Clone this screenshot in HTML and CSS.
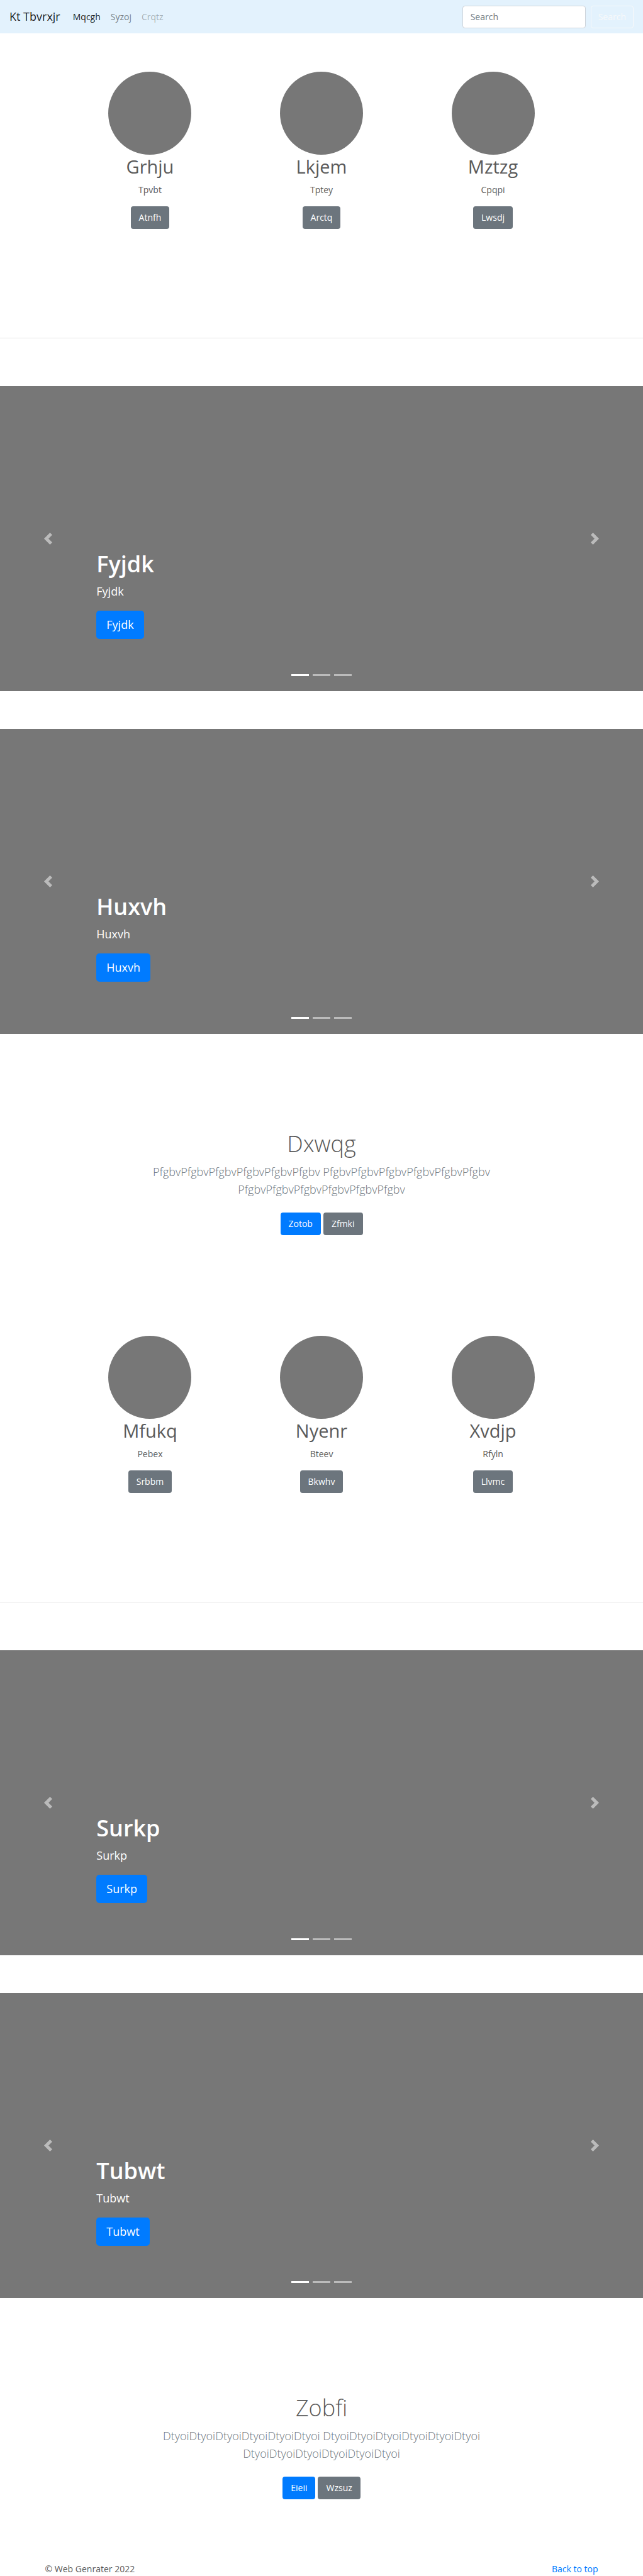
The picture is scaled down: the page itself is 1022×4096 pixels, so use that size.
FILE: index.html
```html
<!DOCTYPE html>
<html lang="en">
<head>
<meta charset="utf-8">
<meta name="viewport" content="width=device-width, initial-scale=1">
<title>Kt Tbvrxjr</title>
<link rel="stylesheet" href="styles.css">
</head>
<body id="top">
<svg class="sprite" aria-hidden="true">
  <symbol id="prev" viewBox="0 0 8 8"><path d="M5.25 0l-4 4 4 4 1.5-1.5-2.5-2.5 2.5-2.5-1.5-1.5z"/></symbol>
  <symbol id="next" viewBox="0 0 8 8"><path d="M2.75 0l-1.5 1.5 2.5 2.5-2.5 2.5 1.5 1.5 4-4-4-4z"/></symbol>
</svg>
<header class="navbar">
  <a class="brand" href="#top">Kt Tbvrxjr</a>
  <nav class="nav">
    <a class="nav-link active" href="#top">Mqcgh</a>
    <a class="nav-link" href="#top">Syzoj</a>
    <a class="nav-link disabled" href="#top" aria-disabled="true">Crqtz</a>
  </nav>
  <form class="search">
    <input class="search-input" type="search" placeholder="Search" aria-label="Search">
    <button class="btn btn-outline" type="submit">Search</button>
  </form>
</header>
<main>
  <section class="team">
    <article class="member"><div class="avatar"></div><h2>Grhju</h2><p>Tpvbt</p><a class="btn btn-secondary" href="#top">Atnfh</a></article>
    <article class="member"><div class="avatar"></div><h2>Lkjem</h2><p>Tptey</p><a class="btn btn-secondary" href="#top">Arctq</a></article>
    <article class="member"><div class="avatar"></div><h2>Mztzg</h2><p>Cpqpi</p><a class="btn btn-secondary" href="#top">Lwsdj</a></article>
  </section>
  <hr>
  <section class="carousel">
    <button class="control" type="button" aria-label="Previous"><svg><use href="#prev"/></svg></button>
    <div class="caption"><h1>Fyjdk</h1><p>Fyjdk</p><a class="btn btn-primary btn-lg" href="#top">Fyjdk</a></div>
    <button class="control" type="button" aria-label="Next"><svg><use href="#next"/></svg></button>
    <div class="indicators"><span class="on"></span><span></span><span></span></div>
  </section>
  <section class="carousel">
    <button class="control" type="button" aria-label="Previous"><svg><use href="#prev"/></svg></button>
    <div class="caption"><h1>Huxvh</h1><p>Huxvh</p><a class="btn btn-primary btn-lg" href="#top">Huxvh</a></div>
    <button class="control" type="button" aria-label="Next"><svg><use href="#next"/></svg></button>
    <div class="indicators"><span class="on"></span><span></span><span></span></div>
  </section>
  <section class="intro">
    <h1>Dxwqg</h1>
    <p>PfgbvPfgbvPfgbvPfgbvPfgbvPfgbv PfgbvPfgbvPfgbvPfgbvPfgbvPfgbv PfgbvPfgbvPfgbvPfgbvPfgbvPfgbv</p>
    <div class="actions"><a class="btn btn-primary" href="#top">Zotob</a><a class="btn btn-secondary" href="#top">Zfmki</a></div>
  </section>
  <section class="team">
    <article class="member"><div class="avatar"></div><h2>Mfukq</h2><p>Pebex</p><a class="btn btn-secondary" href="#top">Srbbm</a></article>
    <article class="member"><div class="avatar"></div><h2>Nyenr</h2><p>Bteev</p><a class="btn btn-secondary" href="#top">Bkwhv</a></article>
    <article class="member"><div class="avatar"></div><h2>Xvdjp</h2><p>Rfyln</p><a class="btn btn-secondary" href="#top">Llvmc</a></article>
  </section>
  <hr>
  <section class="carousel">
    <button class="control" type="button" aria-label="Previous"><svg><use href="#prev"/></svg></button>
    <div class="caption"><h1>Surkp</h1><p>Surkp</p><a class="btn btn-primary btn-lg" href="#top">Surkp</a></div>
    <button class="control" type="button" aria-label="Next"><svg><use href="#next"/></svg></button>
    <div class="indicators"><span class="on"></span><span></span><span></span></div>
  </section>
  <section class="carousel">
    <button class="control" type="button" aria-label="Previous"><svg><use href="#prev"/></svg></button>
    <div class="caption"><h1>Tubwt</h1><p>Tubwt</p><a class="btn btn-primary btn-lg" href="#top">Tubwt</a></div>
    <button class="control" type="button" aria-label="Next"><svg><use href="#next"/></svg></button>
    <div class="indicators"><span class="on"></span><span></span><span></span></div>
  </section>
  <section class="intro">
    <h1>Zobfi</h1>
    <p>DtyoiDtyoiDtyoiDtyoiDtyoiDtyoi DtyoiDtyoiDtyoiDtyoiDtyoiDtyoi DtyoiDtyoiDtyoiDtyoiDtyoiDtyoi</p>
    <div class="actions"><a class="btn btn-primary" href="#top">Eieii</a><a class="btn btn-secondary" href="#top">Wzsuz</a></div>
  </section>
</main>
<footer class="footer"><p>© Web Genrater 2022</p><a href="#top">Back to top</a></footer>
</body>
</html>
```
FILE: styles.css
```css
* { box-sizing: border-box; }

body {
  margin: 0;
  background: #fff;
  color: #5a5a5a;
  font: 400 14px/23px "Open Sans", "Noto Sans", sans-serif;
}

h1, h2, p { margin: 0; }
a { color: #007bff; text-decoration: none; }
.sprite { display: none; }

.btn {
  display: inline-block;
  padding: 6px 12px;
  border: 1px solid transparent;
  border-radius: 4px;
  color: #fff;
  font: inherit;
  line-height: 22px;
  text-align: center;
  vertical-align: top;
}
.btn-primary { background: #007bff; }
.btn-secondary { background: #6c757d; }
.btn-outline {
  padding: 6px 11px;
  background: transparent;
  border-color: #f8f9fa;
  color: #f8f9fa;
}
.btn-lg {
  padding: 8px 15px;
  border-radius: 5px;
  font-size: 18px;
  line-height: 27px;
}

/* Navigation bar */
.navbar {
  display: flex;
  align-items: center;
  height: 53px;
  padding: 0 15px;
  background: #e3f2fd;
}
.brand {
  margin-right: 12px;
  color: rgba(0, 0, 0, .9);
  font-size: 18px;
}
.nav { display: flex; flex: 1; }
.nav-link { padding: 0 8px; color: rgba(0, 0, 0, .5); }
.nav-link.active { color: rgba(0, 0, 0, .9); }
.nav-link.disabled { color: rgba(0, 0, 0, .3); }
.search { display: flex; gap: 8px; }
.search-input {
  width: 196px;
  height: 36px;
  padding: 0 12px;
  border: 1px solid #ced4da;
  border-radius: 4px;
  background: #fff;
  font: inherit;
}
.search-input::placeholder { color: #6c757d; opacity: 1; }

/* Three columns of members */
.team {
  display: grid;
  grid-template-columns: repeat(3, 1fr);
  width: 80%;
  margin: 0 auto;
  padding: 61px 0 173px;
  text-align: center;
}
.avatar {
  width: 132px;
  height: 132px;
  margin: 0 auto;
  border-radius: 50%;
  background: #777;
}
.member h2 {
  margin-bottom: 6px;
  font-size: 29px;
  font-weight: 400;
  line-height: 38px;
}
.member p { margin-bottom: 15px; }

hr {
  height: 1px;
  margin: 0 0 76px;
  border: 0;
  background: rgba(0, 0, 0, .1);
}

/* Carousel */
.carousel {
  position: relative;
  display: grid;
  grid-template-columns: 15% 1fr 15%;
  min-height: 485px;
  background: #777;
  color: #fff;
}
.carousel + .carousel { margin-top: 60px; }
.control {
  display: grid;
  place-items: center;
  padding: 0;
  border: 0;
  background: none;
  opacity: .5;
}
.control svg { width: 19px; height: 19px; fill: #fff; }
.caption { align-self: end; padding-bottom: 83px; }
.caption h1 {
  margin-bottom: 7px;
  font-size: 36px;
  font-weight: 600;
  line-height: 45px;
}
.caption p {
  margin-bottom: 17px;
  font-size: 18px;
  line-height: 28px;
}
.indicators {
  position: absolute;
  right: 0;
  bottom: 24px;
  left: 0;
  display: flex;
  justify-content: center;
  gap: 6px;
}
.indicators span { width: 28px; height: 3px; background: #fff; opacity: .5; }
.indicators .on { opacity: 1; }

/* Introduction block */
.intro {
  max-width: 640px;
  margin: 0 auto;
  padding: 152px 0 99px;
  text-align: center;
}
.intro h1 {
  margin-bottom: 8px;
  font-size: 36px;
  font-weight: 300;
  line-height: 45px;
}
.intro p {
  margin-bottom: 23px;
  color: #6c757d;
  font-size: 18px;
  font-weight: 300;
  line-height: 28px;
}
.actions { display: flex; justify-content: center; gap: 4px; }

.footer {
  display: flex;
  justify-content: space-between;
  padding: 0 7%;
}
```
